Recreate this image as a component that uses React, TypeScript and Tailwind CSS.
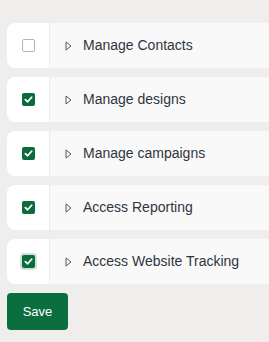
import React from "react";

const items = [
  { label: "Manage Contacts", checked: false, focus: false },
  { label: "Manage designs", checked: true, focus: false },
  { label: "Manage campaigns", checked: true, focus: false },
  { label: "Access Reporting", checked: true, focus: false },
  { label: "Access Website Tracking", checked: true, focus: true },
];

function Box({ checked, focus }: { checked: boolean; focus: boolean }) {
  if (!checked) {
    return <div className="w-[13px] h-[13px] border border-[#b5b5b5] bg-white rounded-[2px]" />;
  }
  return (
    <div className={"w-[13px] h-[13px] bg-[#0b6b3c] rounded-[2px] flex items-center justify-center" + (focus ? " ring-[2px] ring-[#cfe3d6]" : "")}>
      <svg width="9" height="9" viewBox="0 0 10 10">
        <path d="M1.5 5.2 L4 7.5 L8.5 2.5" stroke="white" strokeWidth="2" fill="none" strokeLinecap="round" strokeLinejoin="round" />
      </svg>
    </div>
  );
}

export default function App() {
  return (
    <div className="w-[269px] h-[342px] bg-[#efeeed] pt-[23px] pl-[7px] overflow-hidden" style={{ fontFamily: '"Liberation Sans", Arial, sans-serif' }}>
      <div className="flex flex-col gap-[9px]">
        {items.map((it) => (
          <div key={it.label} className="flex h-[45px]">
            <div className="w-[42px] bg-white rounded-l-[8px] flex items-center justify-center">
              <Box checked={it.checked} focus={it.focus} />
            </div>
            <div className="flex-1 bg-[#f9f9f9] border-l border-[#ececec] rounded-tl-[4px] flex items-center pl-[15px]">
              <svg width="7" height="10" viewBox="0 0 7 10" className="mr-[11px]">
                <path d="M1 1 L6 5 L1 9 Z" fill="none" stroke="#555" strokeWidth="1" strokeLinejoin="round" />
              </svg>
              <span className="text-[14px] text-[#2f3540]">{it.label}</span>
            </div>
          </div>
        ))}
        <button className="w-[61px] h-[37px] bg-[#0b6e3e] rounded-[4px] text-white text-[13px]">Save</button>
      </div>
    </div>
  );
}
